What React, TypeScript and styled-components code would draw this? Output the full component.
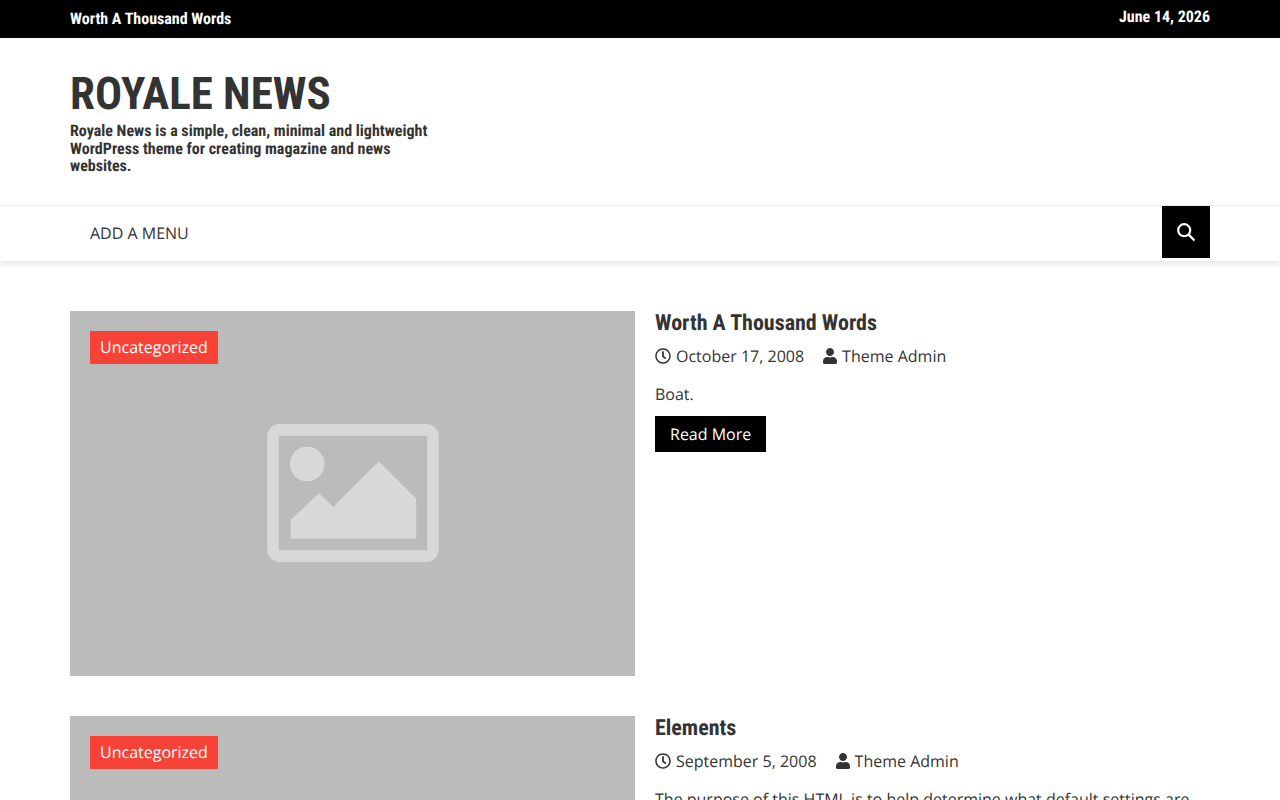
import styled, { createGlobalStyle } from "styled-components";
import { FaRegClock, FaUser } from "react-icons/fa";

const GlobalStyle = createGlobalStyle`
  html, body {
    margin: 0;
    padding: 0;
    overflow: hidden;
    background: #fff;
    color: #333;
    font-family: "Open Sans", sans-serif;
    font-size: 16px;
    line-height: 1.5;
    text-rendering: geometricPrecision;
  }
  * { box-sizing: border-box; }
`;

const headingFont = `font-family: "Roboto", "Liberation Sans", sans-serif; font-stretch: 75%; font-weight: 700;`;

const Wrap = styled.div`
  width: 1140px;
  margin: 0 auto;
`;

const TopBar = styled.div`
  height: 38px;
  background: #000;
  color: #fff;
`;

const TopInner = styled(Wrap)`
  display: flex;
  justify-content: space-between;
  ${headingFont}
  font-size: 16px;
  line-height: 20px;
`;

const TopHeadline = styled.span`
  padding-top: 9px;
`;

const TopDate = styled.span`
  padding-top: 7px;
`;

const Masthead = styled.header`
  height: 167px;
  padding-top: 29px;
`;

const SiteTitle = styled.h1`
  margin: 0;
  ${headingFont}
  font-size: 45px;
  line-height: 54px;
  color: #333;
`;

const Tagline = styled.p`
  margin: 1px 0 0;
  width: 380px;
  ${headingFont}
  font-size: 16px;
  line-height: 17.6px;
  color: #333;
`;

const NavBar = styled.nav`
  height: 56px;
  border-top: 1px solid #eee;
  box-shadow: 0 3px 6px rgba(0, 0, 0, 0.1);
`;

const NavInner = styled(Wrap)`
  display: flex;
  justify-content: space-between;
  align-items: flex-start;
`;

const MenuLink = styled.a`
  padding: 15px 20px;
  font-size: 16px;
  line-height: 24px;
  color: #333;
`;

const SearchButton = styled.button`
  width: 48px;
  height: 52px;
  border: 0;
  padding: 0;
  background: #000;
  color: #fff;
  display: flex;
  align-items: center;
  justify-content: center;
`;

const Feed = styled(Wrap)`
  padding-top: 50px;
  display: flex;
  flex-direction: column;
  gap: 40px;
`;

const Article = styled.article`
  display: grid;
  grid-template-columns: 565px 555px;
  gap: 20px;
`;

const Thumb = styled.div`
  position: relative;
  height: 365px;
  padding-bottom: 1px;
  background: #bbb;
  display: flex;
  align-items: center;
  justify-content: center;
`;

const Badge = styled.a`
  position: absolute;
  top: 20px;
  left: 20px;
  height: 33px;
  padding: 4px 10px;
  background: #f74337;
  color: #fff;
  font-size: 16px;
  line-height: 24px;
`;

const Title = styled.h2`
  margin: 0;
  padding-top: 1px;
  ${headingFont}
  font-size: 22px;
  line-height: 24px;
  color: #333;
`;

const Meta = styled.div`
  margin-top: 8px;
  display: flex;
  gap: 18px;
  line-height: 24px;
  color: #333;
`;

const MetaItem = styled.span<{ $gap: number }>`
  display: inline-flex;
  align-items: center;
  gap: ${(p) => p.$gap}px;
`;

const Excerpt = styled.p`
  margin: 14px 0 0;
  line-height: 24px;
  color: #333;
`;

const ReadMore = styled.a`
  display: inline-block;
  margin-top: 10px;
  padding: 6px 15px;
  background: #000;
  color: #fff;
  line-height: 24px;
`;

const SearchIcon = () => (
  <svg width="20" height="20" viewBox="0 0 20 20" fill="none" stroke="currentColor" strokeWidth="2.2">
    <circle cx="8.2" cy="8.2" r="6" />
    <path d="M12.6 12.6l5.9 5.9" />
  </svg>
);

const PlaceholderIcon = () => (
  <svg width="172" height="138" viewBox="0 0 515 414">
    <rect x="17.5" y="17.5" width="480" height="379" rx="20" fill="none" stroke="#d8d8d8" strokeWidth="35" />
    <circle cx="120" cy="120" r="52" fill="#d8d8d8" />
    <polygon points="70,344 70,289 155,207 198,249 335,112 447,224 447,344" fill="#d8d8d8" />
  </svg>
);

const posts = [
  {
    title: "Worth A Thousand Words",
    date: "October 17, 2008",
    excerpt: "Boat.",
  },
  {
    title: "Elements",
    date: "September 5, 2008",
    excerpt:
      "The purpose of this HTML is to help determine what default settings are with CSS and to make sure that all possible HTML Elements are included in this HTML so as to not miss any possible Elements when designing a site.",
  },
];

export default function App() {
  return (
    <>
      <GlobalStyle />
      <TopBar>
        <TopInner>
          <TopHeadline>Worth A Thousand Words</TopHeadline>
          <TopDate>June 14, 2026</TopDate>
        </TopInner>
      </TopBar>
      <Masthead>
        <Wrap>
          <SiteTitle>ROYALE NEWS</SiteTitle>
          <Tagline>
            Royale News is a simple, clean, minimal and lightweight WordPress theme for creating magazine and news websites.
          </Tagline>
        </Wrap>
      </Masthead>
      <NavBar>
        <NavInner>
          <MenuLink>ADD A MENU</MenuLink>
          <SearchButton aria-label="Search">
            <SearchIcon />
          </SearchButton>
        </NavInner>
      </NavBar>
      <Feed>
        {posts.map((post) => (
          <Article key={post.title}>
            <Thumb>
              <Badge>Uncategorized</Badge>
              <PlaceholderIcon />
            </Thumb>
            <div>
              <Title>{post.title}</Title>
              <Meta>
                <MetaItem $gap={5}>
                  <FaRegClock size={16} />
                  {post.date}
                </MetaItem>
                <MetaItem $gap={4}>
                  <FaUser size={16} />
                  Theme Admin
                </MetaItem>
              </Meta>
              <Excerpt>{post.excerpt}</Excerpt>
              <ReadMore>Read More</ReadMore>
            </div>
          </Article>
        ))}
      </Feed>
    </>
  );
}
